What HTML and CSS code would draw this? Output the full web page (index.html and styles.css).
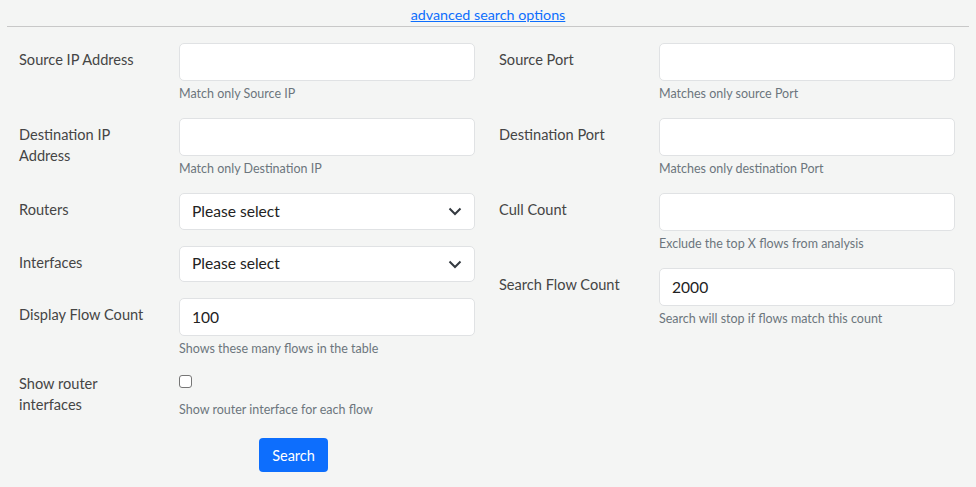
FILE: index.html
```html
<!DOCTYPE html>
<html>
<head>
<meta charset="utf-8">
<link rel="stylesheet" href="styles.css">
</head>
<body>
<div class="page">
  <div class="adv"><a href="#">advanced search options</a></div>
  <hr class="rule">
  <form class="form">
    <div class="cols">
      <div class="col">
        <div class="field">
          <label class="lbl">Source IP Address</label>
          <div class="ctl">
            <input class="input" type="text">
            <div class="help">Match only Source IP</div>
          </div>
        </div>
        <div class="field">
          <label class="lbl">Destination IP Address</label>
          <div class="ctl">
            <input class="input" type="text">
            <div class="help">Match only Destination IP</div>
          </div>
        </div>
        <div class="field">
          <label class="lbl">Routers</label>
          <div class="ctl">
            <div class="select">Please select<svg class="chev" width="14" height="10" viewBox="0 0 14 10"><path d="M1.5 2.5 L7 8 L12.5 2.5" fill="none" stroke="#343a40" stroke-width="2"/></svg></div>
          </div>
        </div>
        <div class="field">
          <label class="lbl">Interfaces</label>
          <div class="ctl">
            <div class="select">Please select<svg class="chev" width="14" height="10" viewBox="0 0 14 10"><path d="M1.5 2.5 L7 8 L12.5 2.5" fill="none" stroke="#343a40" stroke-width="2"/></svg></div>
          </div>
        </div>
        <div class="field">
          <label class="lbl">Display Flow Count</label>
          <div class="ctl">
            <input class="input" type="text" value="100">
            <div class="help">Shows these many flows in the table</div>
          </div>
        </div>
        <div class="field">
          <label class="lbl lbl-check">Show router interfaces</label>
          <div class="ctl">
            <div class="checkrow"><span class="check"></span></div>
            <div class="help">Show router interface for each flow</div>
          </div>
        </div>
      </div>
      <div class="col">
        <div class="field">
          <label class="lbl">Source Port</label>
          <div class="ctl">
            <input class="input" type="text">
            <div class="help">Matches only source Port</div>
          </div>
        </div>
        <div class="field">
          <label class="lbl">Destination Port</label>
          <div class="ctl">
            <input class="input" type="text">
            <div class="help">Matches only destination Port</div>
          </div>
        </div>
        <div class="field">
          <label class="lbl">Cull Count</label>
          <div class="ctl">
            <input class="input" type="text">
            <div class="help">Exclude the top X flows from analysis</div>
          </div>
        </div>
        <div class="field">
          <label class="lbl">Search Flow Count</label>
          <div class="ctl">
            <input class="input" type="text" value="2000">
            <div class="help">Search will stop if flows match this count</div>
          </div>
        </div>
      </div>
    </div>
    <div class="actions"><button class="btn" type="button">Search</button></div>
  </form>
</div>
</body>
</html>
```

FILE: styles.css
```css
* { box-sizing: border-box; }
html, body { margin: 0; padding: 0; }
body {
  background: #f4f5f4;
  font-family: Lato, "Noto Sans", sans-serif;
  color: #444;
  font-size: 14.6px;
  line-height: 21px;
}
.page { padding: 0 7px; width: 976px; }
.adv { text-align: center; padding-top: 4px; height: 26px; }
.adv a { color: #0d6efd; text-decoration: underline; font-size: 14.3px; }
.rule { margin: 0; border: 0; border-top: 1px solid #c8c8c8; }
.form { padding-top: 16px; }
.cols { display: flex; }
.col { width: 480px; padding: 0 12px; }
.field { display: flex; margin-bottom: 16px; }
.lbl { width: 160px; padding-top: 6px; padding-right: 24px; line-height: 21px; color: #454545; }
.lbl-check { padding-top: 0; }
.ctl { width: 296px; }
.input, .select {
  display: block;
  width: 296px;
  height: 38px;
  border: 1px solid #e0e2e4;
  border-radius: 5px;
  background: #fff;
  font-family: inherit;
  font-size: 15.6px;
  color: #222;
  padding: 6px 12px;
  outline: none;
}
.input { margin: 0; }
.select { display: flex; align-items: center; justify-content: space-between; height: 36.5px; }
.help { margin-top: 4px; font-size: 12.5px; line-height: 17px; color: #6c757d; }
.checkrow { height: 24px; padding-top: 2px; }
.check {
  display: block;
  width: 13px; height: 13px;
  border: 1px solid #767676;
  border-radius: 3px;
  background: #fff;
}
.actions { padding-left: 252px; padding-top: 4px; }
.btn {
  background: #0d6efd;
  color: #fff;
  border: 0;
  border-radius: 4px;
  font-family: inherit;
  font-size: 14.5px;
  width: 69px;
  height: 34px;
  padding: 0;
}
```
